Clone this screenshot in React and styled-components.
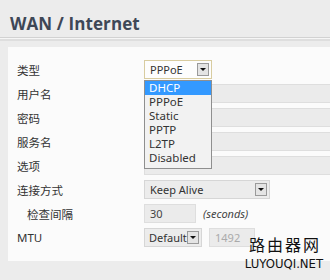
import React from 'react';
import styled, { createGlobalStyle } from 'styled-components';

const Global = createGlobalStyle`
  html, body {
    margin: 0;
    padding: 0;
    background: #ececec;
    width: 330px;
    height: 280px;
    overflow: hidden;
  }
  body {
    font-family: "Noto Sans", "Noto Sans CJK SC", sans-serif;
  }
`;

const types = ['DHCP', 'PPPoE', 'Static', 'PPTP', 'L2TP', 'Disabled'];

const App = () => {
  return (
    <Page>
      <Global />
      <Title>WAN / Internet</Title>
      <Rule />
      <Panel>
        <Row>
          <Label>类型</Label>
          <SelectWrap>
            <Select $width={68} $gold>
              PPPoE
              <Arrow />
            </Select>
            <List>
              {types.map((t, i) => (
                <Item key={t} $active={i === 0}>{t}</Item>
              ))}
            </List>
          </SelectWrap>
        </Row>
        <Row>
          <Label>用户名</Label>
          <Input $width={200} />
        </Row>
        <Row>
          <Label>密码</Label>
          <Input $width={200} />
        </Row>
        <Row>
          <Label>服务名</Label>
          <Input $width={200} />
        </Row>
        <Row>
          <Label>选项</Label>
          <Input $width={200} />
        </Row>
        <Row>
          <Label>连接方式</Label>
          <Select $width={126}>
            Keep Alive
            <Arrow />
          </Select>
        </Row>
        <Row>
          <Label $indent>检查间隔</Label>
          <Input $width={52}>30</Input>
          <Hint>(seconds)</Hint>
        </Row>
        <Row>
          <Label>MTU</Label>
          <Select $width={58} $tight>
            Default
            <Arrow />
          </Select>
          <Input $width={46} $muted>1492</Input>
        </Row>
      </Panel>
      <Watermark>
        <Cn>路由器网</Cn>
        <En>LUYOUQI.NET</En>
      </Watermark>
    </Page>
  );
};

const Page = styled.div`
  position: relative;
  width: 330px;
  height: 280px;
  padding-top: 12px;
  box-sizing: border-box;
`;

const Title = styled.h1`
  margin: 0 0 0 10px;
  font-family: "Open Sans", "Noto Sans", sans-serif;
  font-size: 17px;
  font-weight: 700;
  color: #3e4756;
  line-height: 24px;
  letter-spacing: 0.1px;
`;

const Rule = styled.div`
  margin-top: 1px;
  height: 1px;
  background: #d2d2d2;
  border-bottom: 1px solid #f6f6f6;
  box-shadow: 0 2px 0 #dedede;
`;

const Panel = styled.div`
  margin: 8px 0 0 8px;
  background: #fbfbfb;
  height: 214px;
  box-sizing: border-box;
  padding: 13px 0 0 9px;
  display: flex;
  flex-direction: column;
  gap: 5px;
`;

const Row = styled.div`
  display: flex;
  align-items: center;
  height: 19px;
  gap: 7px;
`;

const Label = styled.div`
  width: ${p => (p.$indent ? 110 : 120)}px;
  padding-left: ${p => (p.$indent ? 10 : 0)}px;
  font-size: 11.5px;
  color: #333;
  flex-shrink: 0;
`;

const SelectWrap = styled.div`
  position: relative;
`;

const Select = styled.div`
  position: relative;
  width: ${p => p.$width}px;
  height: 19px;
  box-sizing: border-box;
  border: 1px solid ${p => (p.$gold ? '#d8cca0' : '#d6d6d6')};
  background: ${p => (p.$gold ? '#fdfdfd' : '#ececec')};
  font-size: 11px;
  color: #333;
  padding-left: ${p => (p.$tight ? 4 : 5)}px;
  line-height: 17px;
  flex-shrink: 0;
  white-space: nowrap;
`;

const Arrow = styled.span`
  position: absolute;
  right: 2px;
  top: 2px;
  width: 12px;
  height: 13px;
  box-sizing: border-box;
  border: 1px solid #9a9a9a;
  background: #e4e4e4;
  &::after {
    content: '';
    position: absolute;
    left: 2px;
    top: 4px;
    border-left: 3px solid transparent;
    border-right: 3px solid transparent;
    border-top: 3px solid #111;
  }
`;

const List = styled.div`
  position: absolute;
  left: 0;
  top: 20px;
  width: 68px;
  box-sizing: border-box;
  border: 1px solid #8f8f8f;
  background: #f2f2f2;
  z-index: 2;
  padding-bottom: 3px;
`;

const Item = styled.div`
  height: 14px;
  line-height: 14px;
  padding-left: 4px;
  font-size: 11.5px;
  color: ${p => (p.$active ? '#fff' : '#333')};
  background: ${p => (p.$active ? '#3399ff' : 'transparent')};
`;

const Input = styled.div`
  width: ${p => p.$width}px;
  height: 19px;
  box-sizing: border-box;
  border: 1px solid #dedede;
  background: #ebebeb;
  font-size: 11px;
  color: ${p => (p.$muted ? '#aaa' : '#444')};
  padding-left: 5px;
  line-height: 17px;
  flex-shrink: 0;
`;

const Hint = styled.span`
  font-style: italic;
  font-size: 11px;
  color: #444;
`;

const Watermark = styled.div`
  position: absolute;
  left: 244px;
  top: 232px;
  display: flex;
  flex-direction: column;
  align-items: center;
  width: 80px;
  white-space: nowrap;
`;

const Cn = styled.div`
  font-family: "Noto Sans CJK SC", sans-serif;
  font-size: 16px;
  line-height: 24px;
  letter-spacing: 2px;
  padding-left: 2px;
  color: #111;
`;

const En = styled.div`
  font-family: "DejaVu Sans Condensed", "DejaVu Sans", sans-serif;
  font-size: 13px;
  line-height: 15px;
  color: #111;
`;

export default App;
